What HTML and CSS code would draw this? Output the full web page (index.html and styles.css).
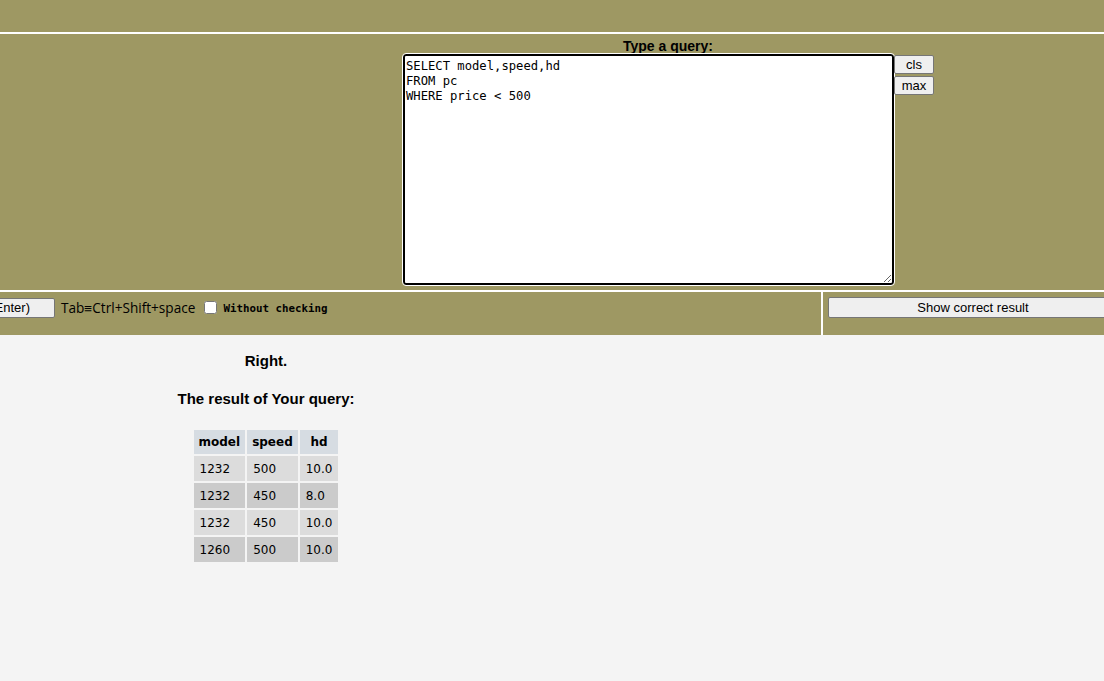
FILE: index.html
```html
<!DOCTYPE html>
<html>
<head>
<meta charset="utf-8">
<link rel="stylesheet" href="styles.css">
</head>
<body>
<div class="topbar"></div>
<div class="query-area">
  <div class="spacer"></div>
  <div class="query-block">
    <div class="query-label">Type a query:</div>
    <div class="editor-row">
      <textarea class="editor" spellcheck="false">SELECT model,speed,hd
FROM pc
WHERE price &lt; 500</textarea>
      <div class="side-buttons">
        <button class="btn small">cls</button>
        <button class="btn small">max</button>
      </div>
    </div>
  </div>
</div>
<div class="control-row">
  <div class="control-left">
    <button class="btn run">Execute (Ctrl+Enter)</button>
    <span class="hint">Tab≡Ctrl+Shift+space</span>
    <input type="checkbox" class="check">
    <span class="mono">Without checking</span>
  </div>
  <div class="control-right">
    <button class="btn show">Show correct result</button>
  </div>
</div>
<div class="result-area">
  <div class="result-col">
    <div class="status">Right.</div>
    <div class="caption">The result of Your query:</div>
    <table class="result">
      <thead>
        <tr><th>model</th><th>speed</th><th>hd</th></tr>
      </thead>
      <tbody>
        <tr class="odd"><td>1232</td><td>500</td><td>10.0</td></tr>
        <tr class="even"><td>1232</td><td>450</td><td>8.0</td></tr>
        <tr class="odd"><td>1232</td><td>450</td><td>10.0</td></tr>
        <tr class="even"><td>1260</td><td>500</td><td>10.0</td></tr>
      </tbody>
    </table>
  </div>
</div>
</body>
</html>
```

FILE: styles.css
```css
html, body {
  margin: 0;
  padding: 0;
}
body {
  background: #f4f4f4;
  font-family: "Liberation Sans", Arial, sans-serif;
  color: #000;
  overflow: hidden;
  height: 681px;
}
.topbar {
  height: 32px;
  background: #9e9863;
  border-bottom: 2px solid #fff;
}
.query-area {
  background: #9e9863;
  height: 256px;
  display: flex;
  border-bottom: 2px solid #fff;
}
.spacer {
  width: 402px;
  flex: none;
}
.query-block {
  display: flex;
  flex-direction: column;
  width: 532px;
  padding-top: 5px;
}
.query-label {
  text-align: center;
  font-weight: bold;
  font-size: 14px;
  line-height: 15px;
  height: 15px;
}
.editor-row {
  display: flex;
  align-items: flex-start;
}
.editor {
  margin: 0 0 0 1px;
  width: 491px;
  height: 231px;
  box-sizing: border-box;
  border: 2px solid #000;
  border-radius: 3px;
  outline: 1px solid #fff;
  padding: 3px 1px 1px;
  font-family: "DejaVu Sans Mono", "Liberation Mono", monospace;
  font-size: 12.2px;
  line-height: 15px;
  color: #000;
  background: #fff;
  resize: both;
}
.side-buttons {
  display: flex;
  flex-direction: column;
  gap: 2px;
  padding-top: 1px;
}
.btn {
  font-family: "Liberation Sans", Arial, sans-serif;
  font-size: 13px;
  color: #000;
  background: #efefef;
  border: 1px solid #767676;
  border-radius: 2px;
  padding: 0;
  box-sizing: border-box;
}
.btn.small {
  width: 40px;
  height: 19px;
  line-height: 17px;
}
.control-row {
  display: flex;
  height: 43px;
  background: #9e9863;
}
.control-left {
  width: 823px;
  flex: none;
  border-right: 2px solid #fff;
  display: flex;
  align-items: flex-start;
  padding-top: 6px;
  box-sizing: border-box;
  white-space: nowrap;
  overflow: hidden;
}
.btn.run {
  flex: none;
  width: 150px;
  height: 20px;
  margin-left: -95px;
  text-align: right;
  padding-right: 24px;
  line-height: 18px;
}
.hint {
  line-height: 20px;
  margin-left: 6px;
  font-family: "Open Sans", "Liberation Sans", sans-serif;
  font-size: 13.6px;
}
.check {
  margin: 3px 0 0 9px;
  width: 13px;
  height: 13px;
}
.mono {
  font-family: "DejaVu Sans Mono", "Liberation Mono", monospace;
  font-weight: bold;
  font-size: 10.8px;
  line-height: 20px;
  margin-left: 6px;
  padding-top: 1px;
}
.control-right {
  flex: 1;
  padding: 5px 0 0 5px;
  overflow: hidden;
}
.btn.show {
  width: 290px;
  height: 21px;
  line-height: 19px;
  font-size: 13px;
}
.result-area {
  display: flex;
}
.result-col {
  width: 532px;
  text-align: center;
}
.status {
  font-weight: bold;
  font-size: 15px;
  line-height: 18px;
  margin-top: 17px;
}
.caption {
  font-weight: bold;
  font-size: 15px;
  line-height: 18px;
  margin-top: 20px;
}
.result {
  margin: 20px auto 0;
  border-collapse: separate;
  border-spacing: 2px;
  font-family: "DejaVu Sans", Verdana, sans-serif;
  font-size: 12px;
  text-align: left;
}
.result th {
  background: #d6dce2;
  font-weight: bold;
  height: 24px;
  padding: 0 5px;
  box-sizing: border-box;
  text-align: center;
}
.result td {
  height: 25px;
  padding: 0 6px;
  box-sizing: border-box;
}
.result tr.odd td {
  background: #dcdcdc;
}
.result tr.even td {
  background: #cbcbcb;
}
```
